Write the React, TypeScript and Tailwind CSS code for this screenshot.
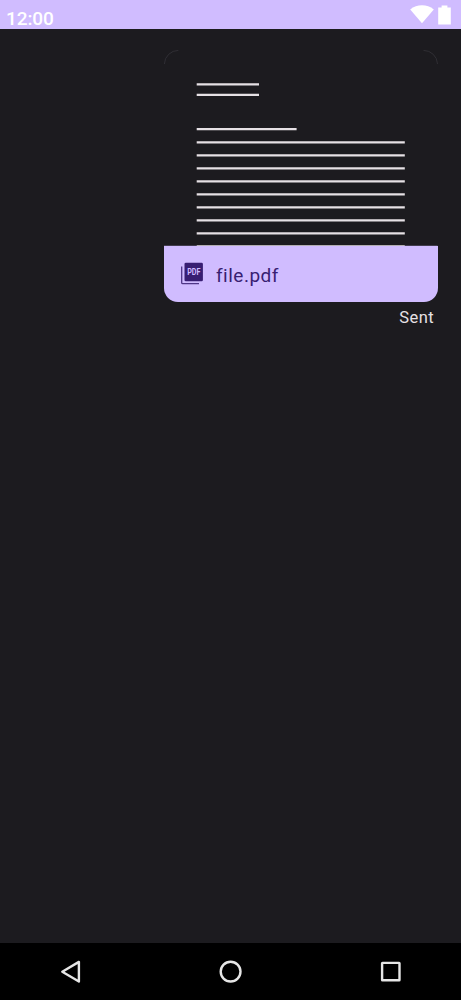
import React from "react";

const bodyLines = [142.3, 155.3, 168.3, 181.3, 194.3, 207.3, 220.3, 233.3, 246.3];

function StatusBar() {
  return (
    <header className="flex h-[29px] items-start justify-between bg-[#d0bcff] pl-1.5 text-white">
      <span className="mt-2 text-[19px] leading-[22px] font-medium tracking-[-0.08px]">12:00</span>
      <svg width="53" height="29" viewBox="408 0 53 29" fill="currentColor" aria-hidden="true">
        <path d="M410.2 9.4Q415.5 5.3 422 5.3Q428.5 5.3 433.8 9.4L422 23.3Z" />
        <path d="M441.6 5.6h5.8v2h3.4v16.8h-12.6V7.6h3.4z" />
      </svg>
    </header>
  );
}

function Preview() {
  return (
    <svg className="block" width="274" height="196" viewBox="164 50 274 196" fill="none" aria-hidden="true">
      <g stroke="#35343a" strokeWidth="0.8">
        <path d="M164.4 64A14 14 0 0 1 178.4 50.4" />
        <path d="M423.5 50.4A14 14 0 0 1 437.5 64" />
      </g>
      <g stroke="#e6e1e5" strokeWidth="2.3">
        <path d="M196.7 84.4H259M196.7 94.9H259M196.7 129.2H296.6" />
        {bodyLines.map((y) => (
          <path key={y} d={`M196.7 ${y}H404.8`} />
        ))}
      </g>
      <path d="M164 245.8H196.7M404.8 245.8H437.5" stroke="#d0bcff" strokeWidth="0.5" opacity="0.6" />
    </svg>
  );
}

function PdfIcon() {
  return (
    <svg width="24" height="24" viewBox="180 262 24 24" aria-hidden="true">
      <path d="M181.7 266.5V282.7Q181.7 283.7 182.7 283.7H199" fill="none" stroke="#381e72" strokeWidth="1.3" opacity="0.85" />
      <rect x="184.5" y="262.8" width="18.4" height="18.4" rx="1.3" fill="#381e72" />
      <text x="187.2" y="275" fontSize="8.4" fontWeight="700" fill="#d0bcff" textLength="13.2" lengthAdjust="spacingAndGlyphs">PDF</text>
    </svg>
  );
}

export default function App() {
  return (
    <div className="flex h-[1000px] w-[461px] flex-col overflow-hidden bg-[#1c1b1f] font-['Roboto',sans-serif]">
      <StatusBar />
      <main className="flex flex-1 flex-col items-end pt-[21px]">
        <div className="mr-[23px] w-[274px]">
          <Preview />
          <div className="mr-[0.5px] flex h-14 items-center rounded-b-[14px] bg-[#d0bcff] pl-4 text-[#381e72]">
            <PdfIcon />
            <span className="ml-3 mt-1 text-[19px] leading-6 tracking-[0.5px]">file.pdf</span>
          </div>
          <div className="mt-[6px] pr-1 text-right text-[16.5px] leading-5 tracking-[0.4px] text-[#e6e1e5]">Sent</div>
        </div>
      </main>
      <nav className="flex h-[57px] items-center bg-black">
        <svg width="461" height="57" viewBox="0 943 461 57" fill="none" stroke="#e6e6e6" strokeWidth="2.4" strokeLinejoin="round" aria-hidden="true">
          <path d="M62.3 971.7L78.9 961.9V981.5Z" />
          <circle cx="230.6" cy="971.6" r="9.9" />
          <rect x="382.1" y="962.9" width="17.4" height="17.4" rx="0.4" />
        </svg>
      </nav>
    </div>
  );
}
